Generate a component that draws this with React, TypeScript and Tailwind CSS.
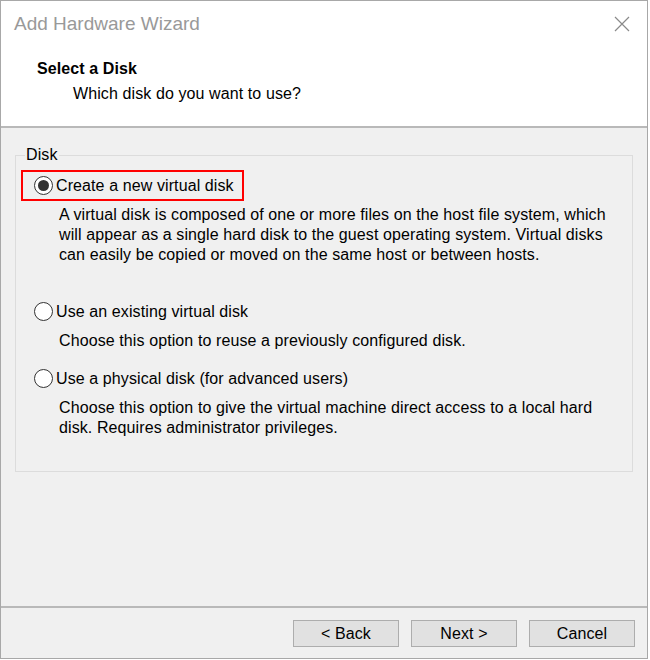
import { useState } from 'react'

const OPTIONS = [
  {
    id: 'new',
    label: 'Create a new virtual disk',
    desc: [
      'A virtual disk is composed of one or more files on the host file system, which',
      'will appear as a single hard disk to the guest operating system. Virtual disks',
      'can easily be copied or moved on the same host or between hosts.',
    ],
  },
  {
    id: 'existing',
    label: 'Use an existing virtual disk',
    desc: ['Choose this option to reuse a previously configured disk.'],
  },
  {
    id: 'physical',
    label: 'Use a physical disk (for advanced users)',
    desc: [
      'Choose this option to give the virtual machine direct access to a local hard',
      'disk. Requires administrator privileges.',
    ],
  },
]

function Radio({ checked }: { checked: boolean }) {
  return (
    <span className="flex h-[19px] w-[19px] shrink-0 items-center justify-center rounded-full border-[1.5px] border-[#333333] bg-white">
      {checked && <span className="h-[11px] w-[11px] rounded-full bg-[#333333]" />}
    </span>
  )
}

export default function App() {
  const [selected, setSelected] = useState('new')

  return (
    <div className="h-[660px] w-[650px] bg-white font-['Liberation_Sans',Arial,sans-serif] text-[16px] tracking-[0.1px] text-black">
      <div className="flex h-[659px] w-[648px] flex-col border border-[#a8a8a8] bg-[#f0f0f0]">
        {/* header */}
        <div className="h-[127px] border-b-2 border-[#b9b9b9] bg-white">
          <div className="flex h-[46px] items-center justify-between pl-[13px] pr-[17px]">
            <span className="text-[19px] tracking-normal text-[#999999]">Add Hardware Wizard</span>
            <svg width="16" height="16" viewBox="0 0 16 16" className="text-[#8a8a8a]">
              <path d="M1 1 L15 15 M15 1 L1 15" stroke="currentColor" strokeWidth="1.2" fill="none" />
            </svg>
          </div>
          <div className="pl-[36px] pt-[12px] font-bold leading-[20px]">Select a Disk</div>
          <div className="pl-[72px] pt-[5px] leading-[20px]">Which disk do you want to use?</div>
        </div>

        {/* body */}
        <div className="flex-1 px-[14px] pt-[18px]">
          <fieldset className="h-[326px] border border-[#dcdcdc] px-[5px] pb-0">
            <legend className="ml-[4px] px-[1px] leading-[18px]">Disk</legend>
            <div className="mt-[6px] flex flex-col">
              {OPTIONS.map((o, i) => (
                <div key={o.id} className={i === 0 ? '' : i === 1 ? 'mt-[31px]' : 'mt-[12px]'}>
                  <button
                    onClick={() => setSelected(o.id)}
                    className={`flex h-[31px] items-center gap-[3px] pl-[11px] pr-[8px] ${
                      o.id === 'new' ? 'border-2 border-[#ff0000]' : 'border-2 border-transparent'
                    }`}
                  >
                    <Radio checked={selected === o.id} />
                    <span>{o.label}</span>
                  </button>
                  <div className="mt-[4px] pl-[38px] leading-[20px]">
                    {o.desc.map(line => (
                      <div key={line}>{line}</div>
                    ))}
                  </div>
                </div>
              ))}
            </div>
          </fieldset>
        </div>

        {/* footer */}
        <div className="flex h-[52px] items-start justify-end gap-[12px] border-t-2 border-[#b9b9b9] pr-[12px] pt-[12px]">
          {['< Back', 'Next >', 'Cancel'].map(b => (
            <button
              key={b}
              className="h-[27px] w-[106px] border border-[#adadad] bg-[#e1e1e1]"
            >
              {b}
            </button>
          ))}
        </div>
      </div>
    </div>
  )
}
